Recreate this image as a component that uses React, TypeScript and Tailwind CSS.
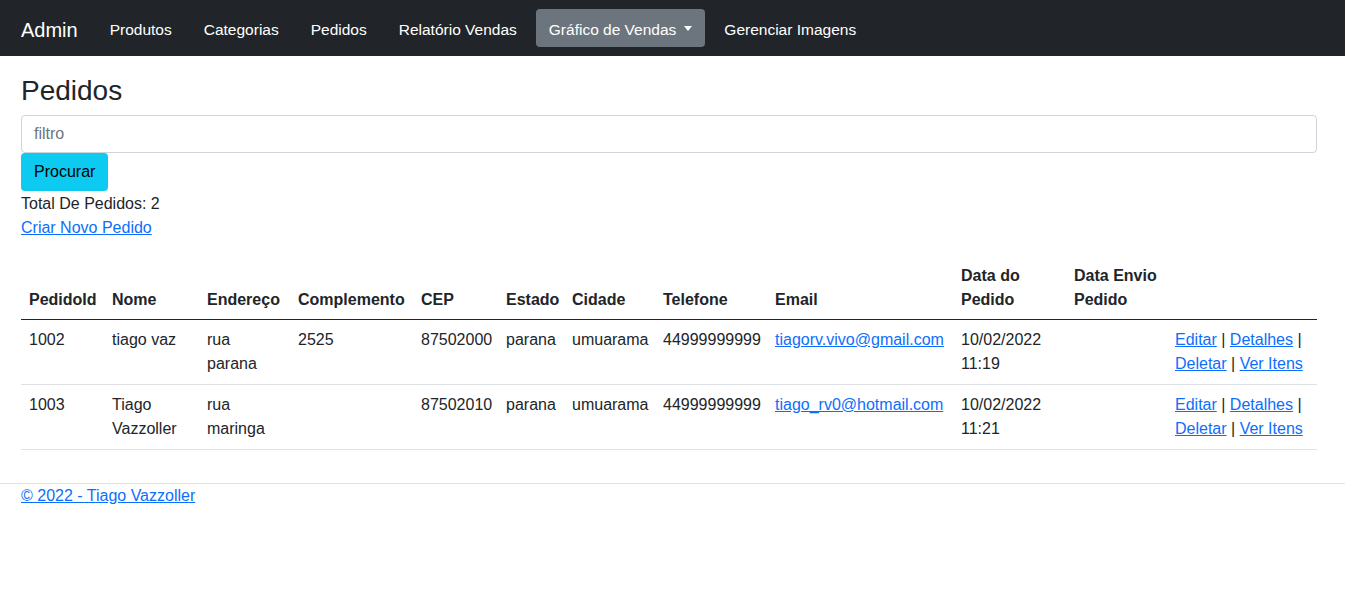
import React from "react";

const navItems = ["Produtos", "Categorias", "Pedidos", "Relatório Vendas"];

interface Pedido {
  id: string;
  nome: React.ReactNode;
  endereco: React.ReactNode;
  complemento: string;
  cep: string;
  estado: string;
  cidade: string;
  telefone: string;
  email: string;
  data: React.ReactNode;
}

const pedidos: Pedido[] = [
  {
    id: "1002",
    nome: "tiago vaz",
    endereco: (
      <>
        rua
        <br />
        parana
      </>
    ),
    complemento: "2525",
    cep: "87502000",
    estado: "parana",
    cidade: "umuarama",
    telefone: "44999999999",
    email: "tiagorv.vivo@gmail.com",
    data: (
      <>
        10/02/2022
        <br />
        11:19
      </>
    ),
  },
  {
    id: "1003",
    nome: (
      <>
        Tiago
        <br />
        Vazzoller
      </>
    ),
    endereco: (
      <>
        rua
        <br />
        maringa
      </>
    ),
    complemento: "",
    cep: "87502010",
    estado: "parana",
    cidade: "umuarama",
    telefone: "44999999999",
    email: "tiago_rv0@hotmail.com",
    data: (
      <>
        10/02/2022
        <br />
        11:21
      </>
    ),
  },
];

const link = "text-[#0d6efd] underline";

export default function App() {
  return (
    <div className="min-h-[591px] bg-white text-[#212529] text-base leading-6 font-['Liberation_Sans',Arial,sans-serif]">
      {/* navbar */}
      <nav className="h-14 bg-[#212529] flex items-center px-[21px]">
        <span className="text-white text-[20px] mr-[19px] pt-[3px]">Admin</span>
        <ul className="flex items-center gap-[6px] text-[15.5px]">
          {navItems.map((item) => (
            <li key={item} className="px-[13px] h-[38px] pt-[3px] flex items-center text-white">
              {item}
            </li>
          ))}
          <li className="px-[13px] h-[38px] pt-[3px] flex items-center bg-[#6c757d] rounded text-white">
            Gráfico de Vendas
            <span className="ml-[8px] mb-[3px] w-0 h-0 border-x-[4.5px] border-x-transparent border-t-[5px] border-t-white" />
          </li>
          <li className="px-[13px] h-[38px] pt-[3px] flex items-center text-white">Gerenciar Imagens</li>
        </ul>
      </nav>

      {/* conteudo */}
      <main className="pl-[21px] pr-[28px] pt-[18px]">
        <h2 className="text-[28px] leading-[34px] mb-[7px]">Pedidos</h2>
        <div className="h-[38px] border border-[#ced4da] rounded px-3 flex items-center text-[#6c757d]">
          filtro
        </div>
        <button className="h-[38px] px-[13px] bg-[#0dcaf0] text-black rounded">
          Procurar
        </button>
        <p className="mt-px">Total De Pedidos: 2</p>
        <p className="mb-4">
          <a className={link}>Criar Novo Pedido</a>
        </p>

        <table className="w-full table-fixed border-collapse">
          <colgroup>
            <col className="w-[83px]" />
            <col className="w-[95px]" />
            <col className="w-[91px]" />
            <col className="w-[123px]" />
            <col className="w-[85px]" />
            <col className="w-[66px]" />
            <col className="w-[91px]" />
            <col className="w-[112px]" />
            <col className="w-[186px]" />
            <col className="w-[113px]" />
            <col className="w-[101px]" />
            <col className="w-[150px]" />
          </colgroup>
          <thead>
            <tr className="border-b border-[#212529] text-left align-bottom">
              <th className="px-2 pt-2 pb-[7px] font-bold">PedidoId</th>
              <th className="px-2 pt-2 pb-[7px] font-bold">Nome</th>
              <th className="px-2 pt-2 pb-[7px] font-bold">Endereço</th>
              <th className="px-2 pt-2 pb-[7px] font-bold">Complemento</th>
              <th className="px-2 pt-2 pb-[7px] font-bold">CEP</th>
              <th className="px-2 pt-2 pb-[7px] font-bold">Estado</th>
              <th className="px-2 pt-2 pb-[7px] font-bold">Cidade</th>
              <th className="px-2 pt-2 pb-[7px] font-bold">Telefone</th>
              <th className="px-2 pt-2 pb-[7px] font-bold">Email</th>
              <th className="px-2 pt-2 pb-[7px] font-bold">
                Data do
                <br />
                Pedido
              </th>
              <th className="px-2 pt-2 pb-[7px] font-bold">
                Data Envio
                <br />
                Pedido
              </th>
              <th className="p-2" />
            </tr>
          </thead>
          <tbody>
            {pedidos.map((p) => (
              <tr key={p.id} className="border-b border-[#dee2e6] align-top">
                <td className="p-2">{p.id}</td>
                <td className="p-2">{p.nome}</td>
                <td className="p-2">{p.endereco}</td>
                <td className="p-2">{p.complemento}</td>
                <td className="p-2">{p.cep}</td>
                <td className="p-2">{p.estado}</td>
                <td className="p-2">{p.cidade}</td>
                <td className="p-2 whitespace-nowrap">{p.telefone}</td>
                <td className="p-2 whitespace-nowrap">
                  <a className={link}>{p.email}</a>
                </td>
                <td className="p-2">{p.data}</td>
                <td className="p-2" />
                <td className="p-2">
                  <a className={link}>Editar</a> | <a className={link}>Detalhes</a> |
                  <br />
                  <a className={link}>Deletar</a> | <a className={link}>Ver Itens</a>
                </td>
              </tr>
            ))}
          </tbody>
        </table>
      </main>

      <footer className="mt-[33px] border-t border-[#dee2e6] px-[21px]">
        <a className={link}>© 2022 - Tiago Vazzoller</a>
      </footer>
    </div>
  );
}
